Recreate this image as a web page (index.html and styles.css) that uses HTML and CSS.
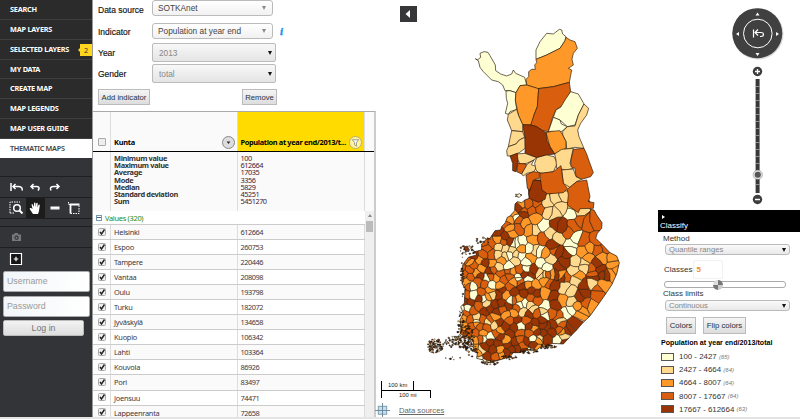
FILE: index.html
```html
<!DOCTYPE html>
<html lang="en">
<head>
<meta charset="utf-8">
<title>Thematic maps</title>
<link rel="stylesheet" href="styles.css">
</head>
<body>
<div class="app">
  <nav class="side">
    <ul class="menu">
      <li>SEARCH</li><li>MAP LAYERS</li><li>SELECTED LAYERS<span class="badge">2</span></li><li>MY DATA</li>
      <li>CREATE MAP</li><li>MAP LEGENDS</li><li>MAP USER GUIDE</li><li class="active">THEMATIC MAPS</li>
    </ul>
    <div class="gap"></div>
    <div class="tools">
      <span><svg viewBox="0 0 14 12"><path d="M2 2v8M13 9.500q1-4-4-4H4M6.500 3L4 5.500 6.500 8"/></svg></span>
      <span><svg viewBox="0 0 14 12"><path d="M10 9.500q3-4-2-4H3M5.500 3L3 5.500 5.500 8"/></svg></span>
      <span><svg viewBox="0 0 14 12"><path d="M3 9.500q-2-4 3-4h5M8.500 3L11 5.500 8.500 8"/></svg></span>
    </div>
    <div class="tools second">
      <span><svg viewBox="0 0 14 14"><path stroke-dasharray="1.500 1" stroke-width="1" d="M1 12V1h10M1 12h5"/><circle cx="8" cy="7" r="3.300"/><path stroke-width="2" d="M10.500 9.500l3 3"/></svg></span>
      <span class="on"><svg viewBox="0 0 14 14"><path fill="#fff" stroke="none" d="M5 13L2 8.500Q1 6.500 3 7l1.500 1L3.500 3.500q.5-1.200 1.300 0L6 6V2q.8-1.200 1.500 0v4l.8-3.800q1-.9 1.400.3L9.400 6.500l1.200-2.700q1-.6 1.200.4L11 10l-1 3z"/></svg></span>
      <span><svg viewBox="0 0 14 14"><path stroke-width="3" d="M2.500 7h9"/><path stroke="#888" stroke-width=".5" d="M4 7.500v1M6 7.500v1M8 7.500v1M10 7.500v1"/></svg></span>
      <span><svg viewBox="0 0 14 14"><path stroke-width="1.800" d="M3.500 12.500V3.500h9"/><path stroke-width="1" stroke-dasharray="1.500 1" d="M1.500 1v2.500h2M3.500 12.500h8.500V3.500"/></svg></span>
    </div>
    <div class="strip"></div>
    <div class="tools cam"><span><svg viewBox="0 0 14 12"><path fill="#77787b" stroke="none" fill-rule="evenodd" d="M3 3.500h2L5.700 2h3l.6 1.500H12V10H3zM7.500 4.500a2.200 2.200 0 1 0 .1 0M7.500 5.700a1 1 0 1 1-.1 0"/></svg></span></div>
    <div class="tools plus"><span><svg viewBox="0 0 14 14"><path fill="#151515" stroke-width="1.200" d="M1.500 1.500h11v11h-11z"/><path stroke-width="1.200" d="M7 4.700v4.600M4.700 7h4.600"/></svg></span></div>
    <div class="login">
      <div class="field">Username</div>
      <div class="field">Password</div>
      <div class="go">Log in</div>
    </div>
  </nav>

  <section class="panel">
    <div class="form">
      <div class="row r1"><label>Data source</label><div class="select">SOTKAnet<i></i></div></div>
      <div class="row r2"><label>Indicator</label><div class="select">Population at year end<i></i></div><b class="info">i</b></div>
      <div class="row r3"><label>Year</label><div class="select wide">2013<i></i></div></div>
      <div class="row r4"><label>Gender</label><div class="select wide">total<i></i></div></div>
      <div class="actions"><span class="btn add">Add indicator</span><span class="btn rem">Remove</span></div>
    </div>
    <div class="grid">
      <div class="head">
        <div class="c0"><span class="box"></span></div>
        <div class="c1"><span>Kunta</span><span class="round"><svg viewBox="0 0 12 12"><path d="M4 5h4L6 7.500z" fill="#223"/></svg></span></div>
        <div class="c2"><span>Population at year end/2013/t...</span><span class="round filter"><svg viewBox="0 0 12 12"><path d="M2.500 3h7L7 6v4L5 8.500V6z" fill="#fff" stroke="#777" stroke-width=".8"/></svg></span></div>
        <div class="c3"></div>
      </div>
      <div class="stats">
        <div class="c0"></div>
        <div class="c1">Minimum value<br>Maximum value<br>Average<br>Mode<br>Median<br>Standard deviation<br>Sum</div>
        <div class="c2">100<br>612664<br>17035<br>3356<br>5829<br>45251<br>5451270</div>
        <div class="c3"></div>
      </div>
      <div class="body">
        <div class="rows" id="rows"><div class="group"><span class="minus"></span>Values (320)</div></div>
        <div class="scroll"><i class="up"></i><i class="thumb"></i></div>
      </div>
    </div>
  </section>

  <main class="map">
    <svg class="finland" id="finland" viewBox="0 0 425 419"></svg>
    <div class="collapse"><svg viewBox="0 0 16 16"><path d="M10 4v8L5.500 8z" fill="#fff"/></svg></div>
    <svg class="nav" viewBox="0 0 80 210">
      <circle cx="38" cy="34" r="25.500" fill="#000" opacity=".15"/>
      <circle cx="37.300" cy="33.200" r="25" fill="#404040"/>
      <circle cx="37.800" cy="33.500" r="14.300" fill="none" stroke="#fff" stroke-width="1"/>
      <path d="M35.500 15.500h4l-2-3zM35.500 53h4l-2 3zM19 32v4l-3-2zM56 32v4l3-2z" fill="#fff"/>
      <path d="M33.500 29.500v8M34.500 32.500h6.500q2.500 0 2.500 2t-2.500 2h-1M38 29.500l-3 3 3 3" fill="none" stroke="#fff" stroke-width="1.200"/>
      <path d="M37.600 79v114" stroke="#383838" stroke-width="4"/>
      <path d="M37.600 86v105" stroke="#aaa" stroke-width="4" stroke-dasharray=".7 6.300"/>
      <g fill="#3d3d3d"><circle cx="37.500" cy="71.500" r="4.700"/><circle cx="37.500" cy="199.500" r="4.700"/></g>
      <path d="M35 71.500h5M37.500 69v5M35 199.500h5" stroke="#fff" stroke-width="1.300"/>
      <circle cx="37.800" cy="174.800" r="3.800" fill="#555" stroke="#ddd" stroke-width="1.500"/><circle cx="37.800" cy="174.800" r="4.700" fill="none" stroke="#888" stroke-width=".5"/>
    </svg>
    <div class="scale"><div class="km">100 km</div><div class="mi">100 mi</div></div>
    <div class="foot"><svg viewBox="0 0 16 16"><rect x="3.500" y="3.500" width="9" height="8.500" fill="#c5e0f4" stroke="#7799aa"/><path d="M8 0v16M0 8h16" stroke="#6d8796"/></svg><a>Data sources</a></div>

    <aside class="classify">
      <header><i></i>Classify</header>
      <div class="cl">Method</div>
      <div class="pick">Quantile ranges<i></i></div>
      <div class="num">Classes<span>5</span></div>
      <div class="slider"><i></i></div>
      <div class="cl limits">Class limits</div>
      <div class="pick">Continuous<i></i></div>
      <div class="pair"><span class="btn">Colors</span><span class="btn">Flip colors</span></div>
      <h4>Population at year end/2013/total</h4>
      <ul class="legend">
        <li><i class="k1"></i>100 - 2427 <em>(65)</em></li>
        <li><i class="k2"></i>2427 - 4664 <em>(64)</em></li>
        <li><i class="k3"></i>4664 - 8007 <em>(64)</em></li>
        <li><i class="k4"></i>8007 - 17667 <em>(64)</em></li>
        <li><i class="k5"></i>17667 - 612664 <em>(63)</em></li>
      </ul>
    </aside>
  </main>
</div>
<div class="bottom"></div>
<script src="map.js"></script>
</body>
</html>
```
FILE: styles.css
```css
* { box-sizing: border-box; }
body { margin: 0; width: 800px; height: 419px; overflow: hidden; background: #fff; font: 9px "Liberation Sans", sans-serif; color: #333; }
ul { list-style: none; margin: 0; padding: 0; }
i { font-style: normal; }
.app { display: flex; height: 417px; overflow: hidden; }
.bottom { height: 2px; background: #e4e4e4; }

.side { width: 92px; background: #333438; flex: none; }
.menu { background: #2b2b2b; font: bold 7.3px "Noto Sans", sans-serif; letter-spacing: -.24px; color: #fff; }
.menu li { height: 19.850px; line-height: 18px; padding-left: 10px; border-bottom: 1px solid #3f3f3f; position: relative; white-space: nowrap; }
.menu .active { background: #fff; color: #444; border: 0; height: 19px; font-weight: 600; letter-spacing: -.3px; }
.badge { position: absolute; right: 0; top: 4px; width: 12px; height: 12px; line-height: 12px; background: #ffd61f; color: #333; text-align: center; font-weight: normal; }
.badge::before { content: ""; position: absolute; left: -2px; top: 4px; border: 2px solid transparent; border-right-color: #ffd61f; border-left: 0; }
.gap { height: 19.500px; border-bottom: 1px solid #1f1f22; }
.tools { display: flex; height: 21px; border-bottom: 1px solid #1f1f22; padding-left: 6px; align-items: center; }
.tools span { width: 19.500px; height: 20px; display: flex; align-items: center; justify-content: center; }
.tools svg { width: 14px; height: 14px; fill: none; stroke: #fff; stroke-width: 1.500; }
.tools .on { background: #1c1c1d; }
.strip { height: 8px; border-bottom: 1px solid #1f1f22; }
.plus { border: 0; height: 22px; }
.login { padding: 1px 2px 0 3px; font-size: 8.800px; color: #999; }
.field { height: 21px; line-height: 19px; border-radius: 2px; border: 1px solid #aaa; background: linear-gradient(100deg, #f2f6f8, #fff); padding-left: 3px; margin-bottom: 3.500px; }
.go { width: 81px; height: 16px; line-height: 15px; text-align: center; border-radius: 2px; background: linear-gradient(#f3f3f3, #ddd); color: #777; border: 1px solid #bbb; }

.panel { width: 283px; flex: none; border-left: 1px solid #999; }
.form { height: 111px; padding: 1px 0 0 5px; }
.row { display: flex; align-items: center; }
.row label { width: 54px; font-size: 8.500px; color: #111; -webkit-text-stroke: .15px #111; padding-top: 2px; }
.r1 { height: 20px; padding-bottom: 5px; }
.r2 { height: 21px; padding-bottom: 1px; }
.r3, .r4 { height: 21px; }
.r3 label, .r4 label { padding-top: 0; }
.select { width: 121px; height: 16px; line-height: 14px; border: 1px solid #bbb; border-radius: 3px; background: linear-gradient(#fff, #f1f1f1); padding-left: 5px; font-size: 8.300px; color: #444; position: relative; }
.select i, .pick i { position: absolute; right: 6px; top: 5px; border: 2.500px solid transparent; border-top: 4px solid #888; border-bottom: 0; }
.wide { width: 124px; height: 19px; line-height: 18px; border-radius: 2px; background: linear-gradient(#f8f8f8, #e4e4e4); color: #888; padding-left: 6px; }
.wide i { top: 7px; right: 3px; border-top-color: #111; }
.r1 .select { margin-top: -1px; }
.info { color: #0a8ff0; font: italic bold 11px "Liberation Serif", serif; margin-left: 7px; -webkit-text-stroke: .3px #0a8ff0; }
.actions { display: flex; justify-content: space-between; width: 179px; padding-top: 4.500px; }
.btn { display: block; height: 16px; line-height: 15px; background: linear-gradient(#f5f5f5, #ddd); border: 1px solid #bbb; text-align: center; font-size: 8.500px; color: #26323f; white-space: nowrap; }
.add { width: 52px; font-size: 7.700px; }
.rem { width: 35px; font-size: 7.700px; }

.grid { height: 307px; border-top: 1px solid #aaa; border-right: 2px solid #ccc; font-family: "Noto Sans", sans-serif; font-size: 7.400px; color: #333; margin-right: -1px; }
.c0 { width: 18px; border-right: 1px solid #ddd; }
.c1 { width: 127px; border-right: 1px solid #ddd; padding-left: 3px; letter-spacing: -.25px; }
.c2 { width: 127px; padding-left: 2.500px; border-right: 1px solid #ddd; letter-spacing: -.5px; }
.c3 { flex: 1; }
.head { display: flex; height: 40px; background: #fafafa; border-bottom: 1.500px solid #000; font-weight: bold; color: #000; }
.head .c2 { background: #ffdb00; letter-spacing: -.34px; }
.head > div { display: flex; align-items: flex-end; justify-content: space-between; padding-bottom: 2px; white-space: nowrap; line-height: 14px; }
.round { width: 13px; height: 13px; border-radius: 50%; background: #ddd; border: 1px solid #888; margin-right: 2px; flex: none; }
.round svg { display: block; width: 11px; height: 11px; }
.filter { background: #fff5a0; border-color: #bbb070; }
.box { width: 8px; height: 8px; border: 1px solid #aaa; border-radius: 1px; background: #eee; margin: 0 auto 3px 5px; }
.stats { display: flex; height: 59px; background: #fafafa; line-height: 7.230px; }
.stats > div { padding-top: 3px; }
.stats .c1 { font-weight: bold; letter-spacing: -.34px; }
.stats .c2 { color: #423; }
.body { display: flex; height: 208px; }
.rows { width: 272px; overflow: hidden; }
.group { height: 14px; line-height: 12px; color: #1a8a1a; border-bottom: 1px solid #ccc; padding-left: 3px; display: flex; align-items: center; gap: 3px; letter-spacing: -.28px; }
.minus { width: 6px; height: 6px; border: 1px solid #79a; background: linear-gradient(#fff 1px, #468 1px, #468 2px, #fff 2px); }
.tr { display: flex; height: 15.050px; border-bottom: 1px solid #ccc; line-height: 14px; }
.tr:nth-child(even) { background: #fafafa; }
.tr .c1, .tr .c2 { color: #423840; }
.tr svg { width: 8px; height: 8px; margin: 2.500px 0 0 5px; display: block; }
.scroll { flex: 1; background: #efefef; display: flex; flex-direction: column; align-items: center; }
.up { margin-top: 3px; border: 2px solid transparent; border-bottom: 3px solid #888; border-top: 0; }
.thumb { width: 7px; height: 11px; margin-top: 4px; background: #bbb; }

.map { width: 425px; position: relative; overflow: hidden; flex: none; }
.finland { position: absolute; left: 0; top: 0; width: 425px; height: 419px; }
.collapse { position: absolute; left: 25px; top: 6px; width: 17px; height: 16px; background: #37373a; }
.collapse svg { display: block; width: 16px; height: 16px; }
.nav { position: absolute; left: 345px; top: 0; width: 80px; height: 210px; }
.scale { position: absolute; left: 6px; top: 381px; width: 50px; font-size: 5.900px; color: #222; }
.km { width: 33px; height: 9px; line-height: 8px; border: solid #000; border-width: 0 1px; padding-left: 6px; }
.mi { height: 8px; line-height: 8px; border: solid #000; border-width: 1px 1px 0 1px; padding-left: 17px; }
.foot { position: absolute; left: 0; top: 403px; display: flex; align-items: center; gap: 9px; color: #666; font-size: 7.700px; }
.foot svg { width: 15px; height: 15px; }
.foot a { text-decoration: underline; }
.classify { position: absolute; left: 283px; top: 210px; width: 142px; font-size: 8px; color: #333; }
.classify header { height: 22px; background: #000; color: #fff; line-height: 9px; display: flex; flex-direction: column; justify-content: flex-end; padding: 0 0 2px 2px; }
.classify header i { margin-left: 2px; width: 0; border: 2px solid transparent; border-left: 3px solid #fff; border-right: 0; margin-bottom: 2px; }
.cl { height: 12px; line-height: 13px; padding-left: 5px; }
.pick { margin-left: 7px; width: 125px; height: 11px; line-height: 10px; border: 1px solid #bbb; border-radius: 3px; background: linear-gradient(#fafafa, #e9e9e9); color: #888; padding-left: 3px; position: relative; font-size: 7.700px; }
.pick i { top: 3px; right: 3px; border-top-color: #111; }
.num { height: 19px; margin-top: 5px; display: flex; align-items: center; padding-left: 6px; gap: 1px; }
.num span { width: 30px; height: 19px; line-height: 18px; border: 1px solid #f1f1f1; border-radius: 2px; color: #f18a1a; padding-left: 2px; font-weight: bold; }
.slider { margin: 2px 0 0 6px; width: 122px; height: 7px; border: 1px solid #aaa; border-radius: 3px; position: relative; }
.slider i { position: absolute; left: 48px; top: -2px; width: 10px; height: 10px; border-radius: 50%; background: conic-gradient(#777 25%, #ccc 0 50%, #777 0 75%, #ddd 0); }
.limits { height: 12px; line-height: 11px; }
.pair { display: flex; gap: 7px; padding: 6px 0 0 8px; }
.pair .btn { height: 17px; width: 30px; font-size: 7.800px; line-height: 16px; }
.pair .btn + .btn { width: 43px; }
.classify h4 { margin: 4px 0 2px 3px; font-size: 7.150px; line-height: 10px; color: #000; white-space: nowrap; }
.legend li { height: 13.200px; display: flex; align-items: center; padding-left: 3px; font-size: 7.900px; white-space: pre; }
.legend i { width: 13px; height: 8px; border: 1px solid #555; margin-right: 5px; }
.legend em { font-size: 6px; color: #777; }
.k1 { background: #ffffd4; } .k2 { background: #fed98e; } .k3 { background: #fe9929; } .k4 { background: #d95f0e; } .k5 { background: #993404; }
```
FILE: map.js
```js
const towns = [['Helsinki', 612664], ['Espoo', 260753], ['Tampere', 220446], ['Vantaa', 208098], ['Oulu', 193798],
  ['Turku', 182072], ['Jyväskylä', 134658], ['Kuopio', 106342], ['Lahti', 103364], ['Kouvola', 86926],
  ['Pori', 83497], ['Joensuu', 74471], ['Lappeenranta', 72658]];
document.getElementById('rows').insertAdjacentHTML('beforeend', towns.map(t =>
  `<div class="tr"><div class="c0"><svg viewBox="0 0 8 8"><rect x=".5" y=".5" width="7" height="7" rx="1" fill="#eee" stroke="#aaa"/><path d="M2 4l1.500 2L6.500 1.500" fill="none" stroke="#222" stroke-width="1.400"/></svg></div><div class="c1">${t[0]}</div><div class="c2">${t[1]}</div></div>`).join(''));

const fill = { y: '#ffffd4', t: '#fed98e', o: '#fe9929', d: '#d95f0e', b: '#993404' };

// Northern municipalities, as outlines
const north = `y 318,118 318,90 330,65 350,40 370,42 388,28 395,30 398,42 408,50 405,62 390,85 350,105
o 318,118 350,105 390,85 405,62 408,52 420,60 435,65 442,85 430,100 426,118 430,135 415,145 425,150 418,187 370,200 322,206 290,195 288,178 296,170 296,155 305,148 316,148 314,135 320,128
y 136,116 142,120 152,112 150,100 162,95 174,97 180,107 196,135 197,152 212,162 230,168 245,162 250,150 257,160 284,172 290,195 270,197 258,218 240,212 225,212 218,195 205,185 185,180 160,155 150,142 145,122
y 228,213 240,212 258,218 256,240 260,268 240,275 235,283 226,280 233,250 229,235
o 258,218 270,197 290,195 326,206 322,260 312,285 308,305 302,315 278,314 265,285 256,240
d 326,206 370,200 418,187 422,215 405,250 378,270 368,292 355,335 338,332 320,320 302,315 312,285 322,260
y 422,215 445,222 462,252 445,285 435,315 412,320 390,300 370,292 378,270 392,262 405,240
y 370,292 390,300 394,312 412,320 400,330 390,338 365,334 355,335 362,315
t 462,252 476,265 470,285 452,310 443,330 447,350 462,385 435,382 410,387 408,365 398,345 398,335 412,320 435,318 445,285
o 348,338 365,334 390,332 398,345 408,365 408,385 380,398 374,402 360,380
b 278,314 302,315 320,320 338,332 348,338 352,362 360,380 374,402 350,405 320,413 285,400 286,360
t 235,283 260,268 265,285 278,314 278,335 245,332 232,300
t 245,332 278,335 284,352 268,360 258,372 235,380 240,355
t 235,380 258,372 268,360 284,352 285,385 268,398 242,408 232,408 230,392
b 240,408 262,400 266,420 262,435 258,455 248,452 248,430
t 262,402 285,400 320,413 312,420 290,430 270,432 264,420
d 264,430 288,432 290,437 275,462 260,455
t 312,420 304,434 320,440 312,455 290,460 280,468 275,462 292,432
t 320,413 350,405 372,410 382,430 370,455 340,460 326,458 318,450 314,430
t 374,402 395,388 430,385 420,430 430,445 410,450 380,445 378,420
d 430,388 462,385 470,402 478,425 490,458 482,470 455,478 438,470 435,445 423,440 422,425
t 395,450 430,447 438,470 455,478 440,485 420,502 400,490
d 330,460 370,455 393,437 400,490 412,505 400,518 350,522 332,510
d 288,465 310,455 328,457 328,475 315,478 300,510 292,505
b 300,510 310,480 332,482 336,510 350,520 345,538 325,547 298,535 296,520
d 412,508 440,485 470,480 474,500 480,530 475,545 492,548 490,565 450,566 445,578 412,555 415,525`.split('\n');

// Seed points for the southern municipalities: colour, then x,y pairs
const middle = {
  y: '340,137 425,97 440,172 422,195 275,187 262,190 298,205 240,225 272,228 237,258 290,245 333,215 335,250 350,262 258,115 265,293 250,190 420,210',
  t: '350,70 385,55 400,50 395,80 370,100 355,95 430,80 445,90 415,5 314,150 360,160 385,175 225,205 245,212 205,225 208,200 258,225 315,210 205,262 435,245 465,250 360,235 330,280 345,285 430,270 225,230 255,240 465,262',
  o: '315,115 285,130 245,160 240,145 310,180 275,75 250,100 240,118 205,180 300,235 275,205 120,245 155,265 345,220 480,205 550,255 460,215 445,290 300,150 185,250 370,285 215,240 150,240 548,235 555,275 515,235 475,235',
  d: '370,15 450,50 475,35 430,140 415,155 475,130 500,125 455,120 460,180 500,210 340,175 320,70 330,85 295,75 265,120 230,130 265,145 185,190 170,205 160,225 185,225 165,185 120,270 105,285 140,280 375,210 405,290 270,270 240,275 485,265 530,200 500,180 190,270 220,185 445,65 280,95 130,255 115,240 305,90 490,285',
  b: '380,135 395,140 370,195 385,215 410,220 390,260 405,245 268,85 280,100 205,155 225,170 240,185 510,270 525,285 180,275 310,270 130,225 165,248 150,290 315,30 500,250'
};
const south = {
  b: '330,15 405,15 430,20 495,70 480,80 400,80 405,105 400,45 310,70 335,60 195,125 210,115 230,125 245,60 235,75 245,100 150,98 380,170 370,190 395,185 350,190 365,150 290,150 210,215 235,220 220,240 200,260 195,230 240,200 290,235 285,215 265,225 450,170 460,155 440,180 550,15 520,20 255,170 270,190 235,160 330,170 345,160 320,215 275,240 265,110 180,85 495,45 370,165 400,165 430,220 380,205',
  d: '175,35 150,20 210,20 240,12 270,20 390,40 380,15 300,35 350,90 185,70 160,120 210,150 150,150 135,130 320,150 300,190 330,190 310,225 415,140 425,165 395,130 420,180 270,150 280,90 290,115 350,130 180,170 165,190 145,185 230,190 530,75 500,100 250,30 195,40 150,50 140,75 270,50 185,205 535,60',
  o: '240,45 260,75 345,45 375,70 425,15 430,90 470,110 475,135 550,45 515,105 575,10 425,185 280,130 225,140 205,80 170,160 240,180 245,255 175,248 355,210 340,175 170,10 140,35 230,25 275,5 130,145 190,190 135,170 210,60 375,30 260,135 485,125',
  y: '155,50 160,75 200,25 295,25 325,25 300,105 315,100 375,110 440,130 455,120 275,90 190,85 300,170 340,205 215,45 190,205 170,155 415,210 375,135 210,200',
  t: '310,125 330,105 340,120 365,15 375,15 470,30 515,40 450,65 455,95 420,155 435,55 370,125 430,200 215,75 170,145 205,155 225,165 360,205 200,100 185,240'
};
const seeds = [];
const read = (src, dx, dy) => Object.entries(src).forEach(([c, s]) => s.split(' ').forEach(p => {
  const [x, y] = p.split(',').map(Number); seeds.push([x + dx, y + dy, c]);
}));
read(middle, 0, 480);
read(south, -30, 750);

let state = 7;
const rnd = () => (state = (state * 16807) % 2147483647) / 2147483647;
for (let n = 0; n < 1200; n++) {
  const x = 90 + rnd() * 240, y = 740 + rnd() * 290;
  if (seeds.every(s => Math.hypot(s[0] - x, s[1] - y) > 16.5)) seeds.push([x, y, 'bbbbddoody'[Math.floor(rnd() * 10)]]);
}

const coast = '292,480 298,535 285,540 275,548 262,545 255,552 254,572 240,588 232,592 226,608 215,620 212,630 195,632 180,655 172,655 155,672 155,690 135,695 140,705 115,712 98,735 98,760 96,790 105,805 103,850 92,860 100,880 90,900 95,930 90,940 110,952 130,962 130,985 142,1000 140,1015 160,1020 160,1030 190,1025 215,1018 240,1010 250,998 270,998 290,990 320,990 330,982 355,978 365,970 400,972 420,950 440,930 455,912 480,888 500,860 520,832 545,795 560,762 568,728 560,708 540,698 515,672 497,655 502,640 515,625 516,608 500,585 492,570 480,568 480,545 430,480';

// Voronoi cell of seed i, by cutting a box with each bisector
function cell(i) {
  const [ax, ay] = seeds[i];
  let poly = [[ax - 75, ay - 75], [ax + 75, ay - 75], [ax + 75, ay + 75], [ax - 75, ay + 75]];
  seeds.forEach(([bx, by], j) => {
    if (i === j || Math.hypot(bx - ax, by - ay) > 215) return;
    const nx = bx - ax, ny = by - ay, m = (bx * bx + by * by - ax * ax - ay * ay) / 2, out = [];
    if (!nx && !ny) return;
    poly.forEach((p, k) => {
      const q = poly[(k + 1) % poly.length], dp = p[0] * nx + p[1] * ny - m, dq = q[0] * nx + q[1] * ny - m;
      if (dp <= 0) out.push(p);
      if (dp * dq < 0) { const t = dp / (dp - dq); out.push([p[0] + (q[0] - p[0]) * t, p[1] + (q[1] - p[1]) * t]); }
    });
    poly = out;
  });
  return poly;
}
// A slight bend in the middle of each border, the same from both sides
function wobble(poly) {
  const pts = [];
  poly.forEach((p, k) => {
    const q = poly[(k + 1) % poly.length], len = Math.hypot(q[0] - p[0], q[1] - p[1]);
    pts.push(p);
    if (len > 6) {
      const mx = (p[0] + q[0]) / 2, my = (p[1] + q[1]) / 2;
      pts.push([mx + Math.sin(Math.round(mx) * 1.7 + Math.round(my)) * len * .13, my + Math.cos(Math.round(my) * 2.3) * len * .13]);
    }
  });
  return pts.map(p => p.map(v => v.toFixed(1)).join()).join(' ');
}
let art = `<defs><clipPath id="land"><polygon points="${coast}"/></clipPath></defs><g transform="translate(55 20) scale(.33333)" stroke="#2b1a08" stroke-width="2" stroke-linejoin="round"><g clip-path="url(#land)" stroke-width="1.700">`;
seeds.forEach((s, i) => { art += `<polygon points="${wobble(cell(i))}" fill="${fill[s[2]]}"/>`; });
art += `</g><polygon points="${coast}" fill="none" stroke-width="2.200"/>`;
north.forEach(l => { art += `<polygon points="${l.slice(2)}" fill="${fill[l[0]]}"/>`; });
// Islands: x, y, spread x, spread y, count
[[17, 978, 24, 22, 100], [80, 965, 40, 18, 75], [105, 950, 28, 35, 110], [125, 990, 20, 20, 35], [92, 905, 9, 35, 25], [112, 690, 26, 14, 32], [160, 660, 22, 14, 18], [98, 770, 6, 60, 25], [265, 526, 10, 5, 8], [180, 1028, 28, 6, 24], [235, 1013, 30, 7, 22], [295, 994, 28, 6, 30], [350, 979, 28, 7, 30], [65, 1015, 35, 6, 6]].forEach(([x, y, sx, sy, n]) => {
  for (let k = 0; k < n; k++) {
    const a = rnd() * 6.283, r = Math.sqrt(rnd()), w = 1.5 + rnd() * 3;
    art += `<ellipse cx="${x + Math.cos(a) * r * sx}" cy="${y + Math.sin(a) * r * sy}" rx="${w / 1.5}" ry="${w / 2}" stroke-width="1.300" fill="${'#222 #222 #222 #fed98e #993404'.split(' ')[k % 5]}"/>`;
  }
});
art += '<path fill="#ffffd4" d="M260 525l8-4 6 5-6 6-7-2z"/><path fill="#993404" d="M102 682l10-4 4 9-8 8z"/></g>';
document.getElementById('finland').innerHTML = art;
```
